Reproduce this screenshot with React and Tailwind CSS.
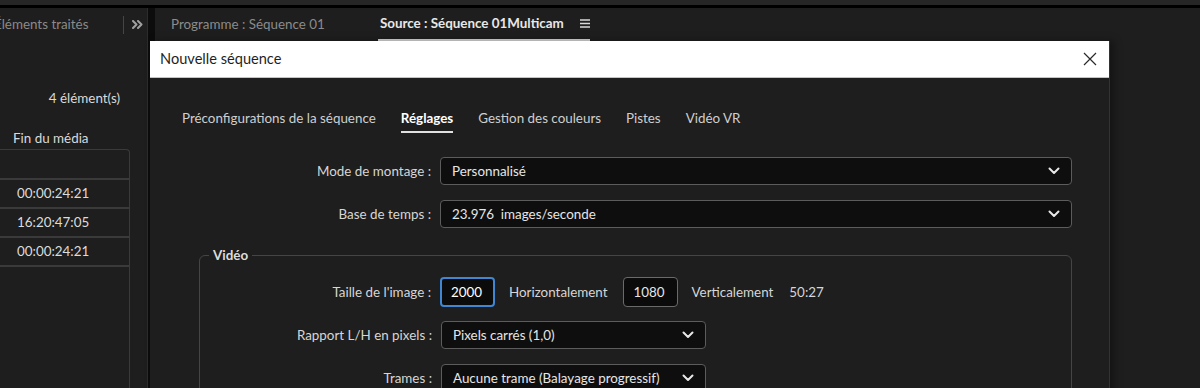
import React from 'react';

const font = { fontFamily: 'Lato, "Noto Sans", sans-serif' };

function Chevron() {
  return (
    <svg width="12" height="8" viewBox="0 0 12 8">
      <polyline points="1.5,1.5 6,6 10.5,1.5" fill="none" stroke="#e8e8e8" strokeWidth="2" strokeLinecap="round" strokeLinejoin="round" />
    </svg>
  );
}

function Select({ value, width }) {
  return (
    <div className={`${width} h-[28px] flex items-center justify-between pl-[11px] pr-[11px] bg-[#0e0e0e] border-[1.5px] border-[#5c5c5c] rounded-[4px] text-[13.4px] text-[#e6e6e6]`}>
      <span>{value}</span>
      <Chevron />
    </div>
  );
}

function Row({ label, labelW, children, className = '' }) {
  return (
    <div className={`flex items-center ${className}`}>
      <div className={`${labelW} text-right text-[13.4px] text-[#d6d6d6] pr-[9px]`}>{label}</div>
      {children}
    </div>
  );
}

function LeftPanel() {
  return (
    <div className="w-[148px] shrink-0 flex flex-col border-r border-[#2c2c2c]">
      <div className="h-[33px] flex items-center">
        <span className="ml-[-6px] text-[13.4px] text-[#8a8a8a] whitespace-nowrap">Éléments traités</span>
        <div className="ml-auto w-px h-[18px] bg-[#454545]" />
        <svg width="11" height="9" viewBox="0 0 11 9" className="ml-[8px] mr-[4px]">
          <path d="M1 1 L4.5 4.5 L1 8 M6 1 L9.5 4.5 L6 8" fill="none" stroke="#a0a0a0" strokeWidth="2" strokeLinecap="round" strokeLinejoin="round" />
        </svg>
      </div>
      <div className="h-[47px]" />
      <div className="h-[18px] flex justify-end pr-[27px] text-[13.4px] text-[#dadada]">4 élément(s)</div>
      <div className="h-[22px]" />
      <div className="h-[18px] pl-[13px] text-[13.4px] text-[#dadada]">Fin du média</div>
      <div className="mt-[3px] w-[130px] flex-1 border-t border-r border-[#3a3a3a] rounded-tr-[4px]">
        <div className="h-[30px] border-b-2 border-[#3a3a3a]" />
        {['00:00:24:21', '16:20:47:05', '00:00:24:21'].map((t, i) => (
          <div key={i} className="h-[29px] border-b-2 border-[#3a3a3a] flex items-center pl-[17px] text-[13.4px] text-[#dcdcdc]">
            {t}
          </div>
        ))}
      </div>
    </div>
  );
}

function RightPanel() {
  return (
    <div className="flex-1 flex flex-col">
      <div className="h-[33px] flex items-center pl-[16px]">
        <span className="text-[13.4px] text-[#8b8b8b]">Programme : Séquence 01</span>
        <div className="ml-[53px] h-full flex items-center border-b-2 border-[#d6d6d6]">
          <span className="ml-[2px] text-[13.4px] font-bold text-[#e8e8e8]">Source : Séquence 01Multicam</span>
          <svg width="10" height="9" viewBox="0 0 10 9" className="ml-[16px]">
            <path d="M0 1 H10 M0 4.5 H10 M0 8 H10" stroke="#d8d8d8" strokeWidth="1.3" />
          </svg>
        </div>
      </div>
    </div>
  );
}

function Dialog() {
  const tabs = ['Préconfigurations de la séquence', 'Réglages', 'Gestion des couleurs', 'Pistes', 'Vidéo VR'];
  return (
    <div className="absolute left-[150px] top-[41px] w-[960px] h-[360px] bg-[#1e1e1e] border-r border-[#333333] shadow-[4px_0_8px_rgba(0,0,0,0.35)]">
      <div className="h-[37px] bg-white border-b border-[#c4c4c4] flex items-center justify-between pl-[10px] pr-[12px]">
        <span className="text-[14.6px] text-[#1f1f1f]">Nouvelle séquence</span>
        <svg width="14" height="14" viewBox="0 0 14 14">
          <path d="M1 1 L13 13 M13 1 L1 13" stroke="#2a2a2a" strokeWidth="1.2" />
        </svg>
      </div>

      <div className="pt-[30px] pl-[32px] flex gap-[25px]">
        {tabs.map((t) => (
          <div
            key={t}
            className={`pb-[3px] text-[13.4px] border-b-2 ${t === 'Réglages' ? 'text-white font-bold border-[#e0e0e0]' : 'text-[#cfcfcf] border-transparent'}`}
          >
            {t}
          </div>
        ))}
      </div>

      <div className="pl-[49px] pr-[37px] pt-[24px] flex flex-col">
        <Row label="Mode de montage :" labelW="w-[241px]">
          <Select value="Personnalisé" width="flex-1" />
        </Row>
        <Row label="Base de temps :" labelW="w-[241px]" className="mt-[15px]">
          <Select value={'23.976\u00a0\u00a0images/seconde'} width="flex-1" />
        </Row>

        <fieldset className="mt-[17px] border border-[#454545] rounded-[6px] pb-[20px]">
          <legend className="ml-[9px] px-[4px] text-[13.4px] font-bold text-[#dcdcdc]">Vidéo</legend>
          <Row label="Taille de l'image :" labelW="w-[240px]" className="mt-[12px]">
            <div className="w-[55px] h-[30px] flex items-center pl-[9px] bg-[#0b0b0b] border-2 border-[#3f86d3] rounded-[4px] text-[13.4px] text-white">2000</div>
            <span className="ml-[14px] text-[13.4px] text-[#d6d6d6]">Horizontalement</span>
            <div className="ml-[15px] w-[55px] h-[30px] flex items-center pl-[10px] bg-[#0b0b0b] border border-[#6a6a6a] rounded-[4px] text-[13.4px] text-[#e6e6e6]">1080</div>
            <span className="ml-[14px] text-[13.4px] text-[#d6d6d6]">Verticalement</span>
            <span className="ml-[16px] text-[13.4px] text-[#d6d6d6]">50:27</span>
          </Row>
          <Row label="Rapport L/H en pixels :" labelW="w-[241px]" className="mt-[14px]">
            <Select value="Pixels carrés (1,0)" width="w-[265px]" />
          </Row>
          <Row label="Trames :" labelW="w-[241px]" className="mt-[15px]">
            <Select value="Aucune trame (Balayage progressif)" width="w-[265px]" />
          </Row>
        </fieldset>
      </div>
    </div>
  );
}

export default function App() {
  return (
    <div className="relative w-[1200px] h-[388px] overflow-hidden bg-[#1e1e1e] flex flex-col" style={font}>
      <div className="h-[5px] bg-[#262626]" />
      <div className="h-[3px] bg-black" />
      <div className="flex-1 flex">
        <LeftPanel />
        <div className="w-[7px] bg-[#0c0c0c]" />
        <RightPanel />
      </div>
      <Dialog />
    </div>
  );
}
